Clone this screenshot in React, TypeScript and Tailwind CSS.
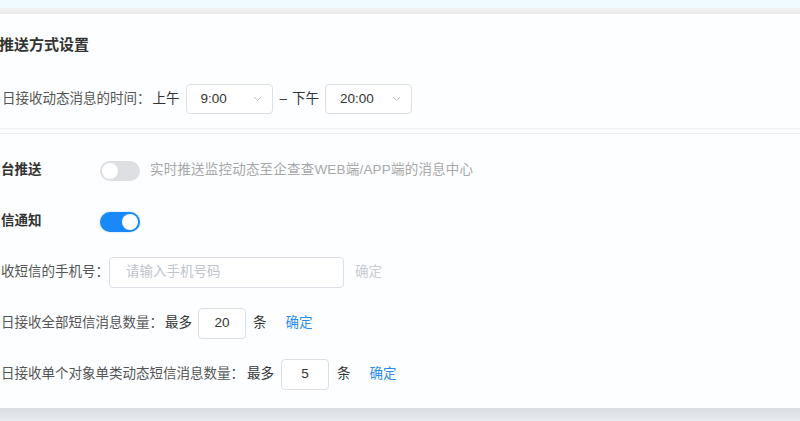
import React from "react";

const font = {
  fontFamily: '"Liberation Sans", "Noto Sans CJK SC", sans-serif',
};

function Chevron() {
  return (
    <svg width="9" height="6" viewBox="0 0 9 6" fill="none">
      <path d="M1 1l3.5 3.5L8 1" stroke="#c0c4cc" strokeWidth="1" />
    </svg>
  );
}

function Select({ value }: { value: string }) {
  return (
    <div className="flex h-[30px] w-[87px] items-center justify-between rounded-[4px] border border-[#dcdfe6] bg-white pl-[14px] pr-[10px] text-[13.5px] text-[#333]">
      <span>{value}</span>
      <Chevron />
    </div>
  );
}

function Toggle({ on }: { on: boolean }) {
  return (
    <div
      className={
        on
          ? "flex h-[20px] w-[40px] items-center justify-end rounded-full bg-[#1989fa] px-[2px] shadow-[0_0_2px_rgba(25,137,250,0.4)]"
          : "flex h-[20px] w-[40px] items-center justify-start rounded-full bg-[#dddfe2] px-[2px]"
      }
    >
      <div className="h-[16px] w-[16px] rounded-full bg-white" />
    </div>
  );
}

function NumInput({ value }: { value: string }) {
  return (
    <div className="flex h-[31px] w-[48px] items-center justify-center rounded-[4px] border border-[#dcdfe6] bg-white text-[13.5px] text-[#333]">
      {value}
    </div>
  );
}

export default function App() {
  return (
    <div
      className="flex h-[421px] w-[800px] flex-col overflow-hidden bg-[#e4e8ec]"
      style={font}
    >
      <div className="h-[8px] shrink-0 bg-[#effbfe]" />
      <div className="h-[6px] shrink-0 bg-gradient-to-b from-[#f3f3f3] to-[#e9e9e9]" />
      <div className="h-[394px] shrink-0 bg-[#fcfeff] pt-[20px]">
        <div className="ml-[2px]">
          <div className="-ml-[3px] h-[22px] text-[15px] font-bold leading-[22px] text-[#333]">
            推送方式设置
          </div>
          <div className="mt-[28px] flex h-[30px] items-center text-[13.5px] text-[#333]">
            <span className="text-[#555]">日接收动态消息的时间：</span>
            <span className="ml-[2px]">上午</span>
            <div className="ml-[6px]">
              <Select value="9:00" />
            </div>
            <span className="ml-[7px]">–</span>
            <span className="ml-[5px]">下午</span>
            <div className="ml-[6px]">
              <Select value="20:00" />
            </div>
          </div>
        </div>
        <div className="mt-[14px] h-px bg-[#f1f3f5]" />
        <div className="mt-[4px] h-px bg-[#e8eaed]" />
        <div className="ml-[1px] mt-[21px] flex flex-col gap-[20px] text-[13.5px] text-[#333]">
          <div className="flex h-[31px] items-center">
            <span className="w-[99px] font-bold">台推送</span>
            <Toggle on={false} />
            <span className="ml-[10px] tracking-[0.2px] text-[#a8a8a8]">
              实时推送监控动态至企查查WEB端/APP端的消息中心
            </span>
          </div>
          <div className="flex h-[31px] items-center">
            <span className="w-[99px] font-bold">信通知</span>
            <Toggle on={true} />
          </div>
          <div className="flex h-[31px] items-center">
            <span className="text-[#555]">收短信的手机号：</span>
            <div className="flex h-[31px] w-[235px] items-center rounded-[4px] border border-[#dcdfe6] bg-white pl-[16px] text-[#c0c4cc]">
              请输入手机号码
            </div>
            <span className="ml-[11px] text-[#c8ccd2]">确定</span>
          </div>
          <div className="flex h-[31px] items-center">
            <span className="text-[#555]">日接收全部短信消息数量：</span>
            <span className="ml-[2px]">最多</span>
            <div className="ml-[6px]">
              <NumInput value="20" />
            </div>
            <span className="ml-[7px]">条</span>
            <span className="ml-[19px] text-[#2d8cf0]">确定</span>
          </div>
          <div className="flex h-[31px] items-center">
            <span className="text-[#555]">日接收单个对象单类动态短信消息数量：</span>
            <span className="ml-[3px]">最多</span>
            <div className="ml-[7px]">
              <NumInput value="5" />
            </div>
            <span className="ml-[8px]">条</span>
            <span className="ml-[19px] text-[#2d8cf0]">确定</span>
          </div>
        </div>
      </div>
      <div className="flex-1 bg-gradient-to-b from-[#d9dee2] to-[#e8ecf0]" />
    </div>
  );
}
